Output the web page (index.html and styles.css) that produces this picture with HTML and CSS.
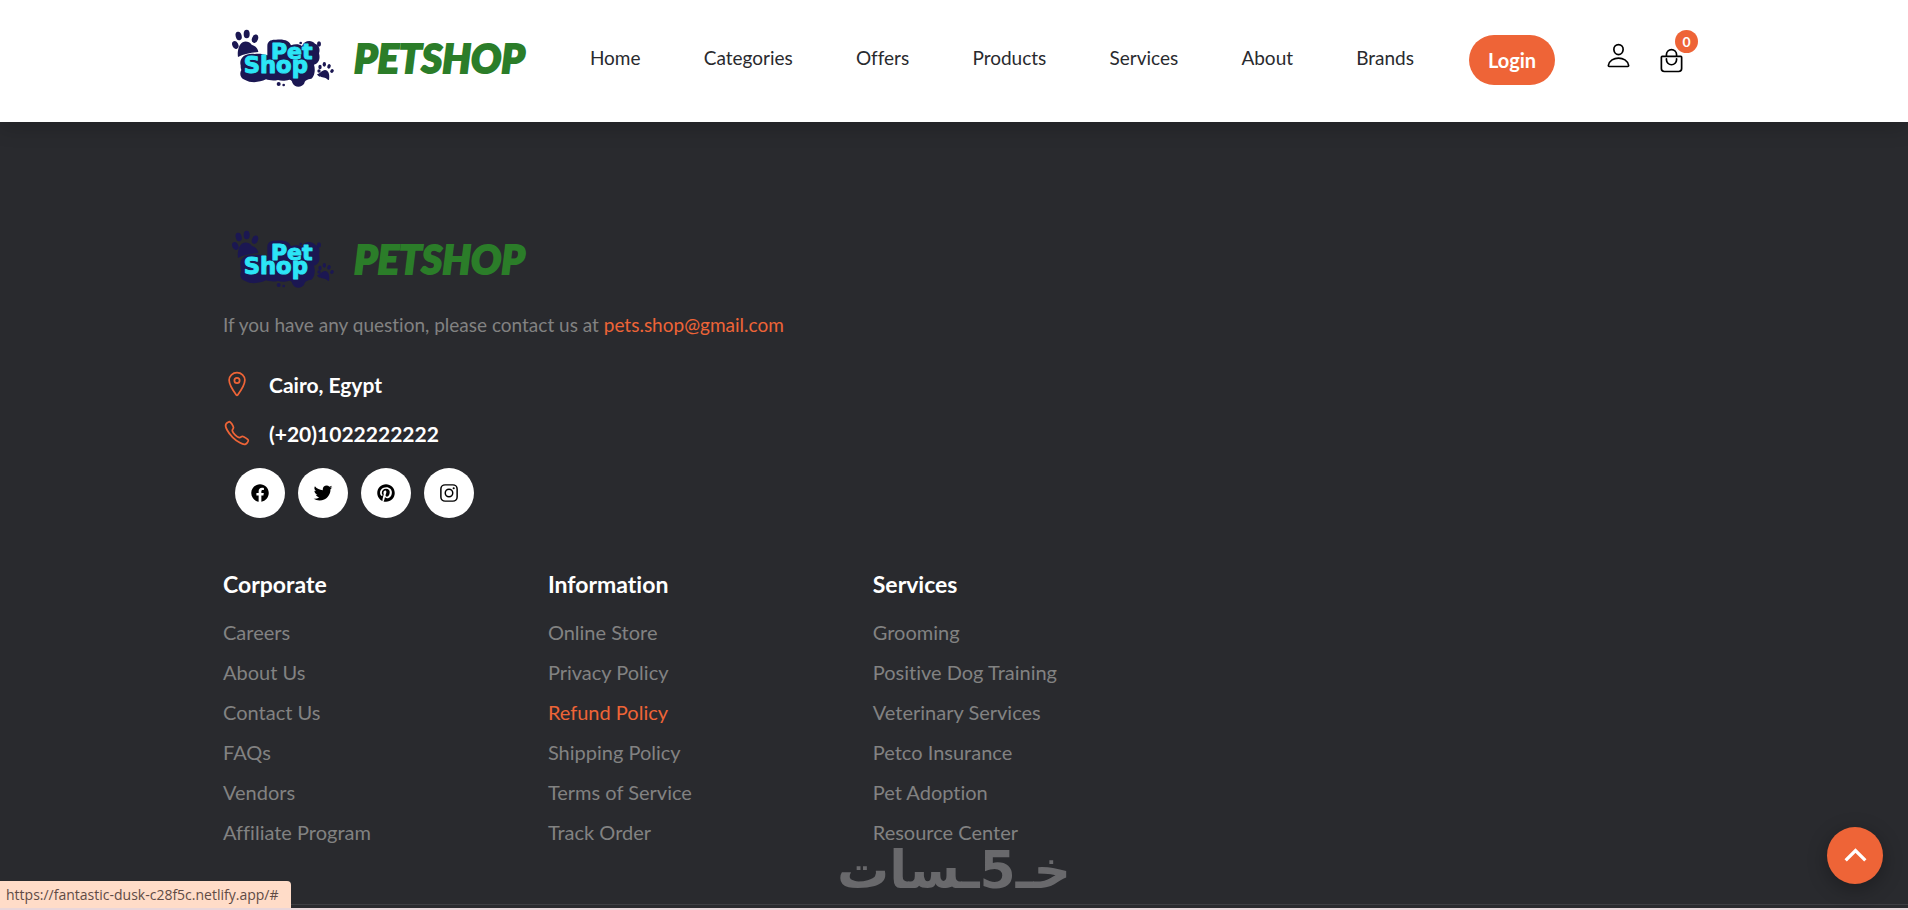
FILE: index.html
```html
<!DOCTYPE html>
<html lang="en">
<head>
  <meta charset="UTF-8">
  <meta name="viewport" content="width=device-width, initial-scale=1.0">
  <title>PetShop</title>
  <link rel="stylesheet" href="styles.css">
</head>
<body>

  <!-- Shared logo artwork -->
  <svg class="sprite" aria-hidden="true">
    <symbol id="logo-art" viewBox="54 48 324 192">
      <g fill="#1b1752">
        <ellipse cx="76" cy="105" rx="9" ry="12" transform="rotate(-25 76 105)"/>
        <ellipse cx="86" cy="78" rx="9" ry="13" transform="rotate(-15 86 78)"/>
        <ellipse cx="110" cy="72" rx="9" ry="13"/>
        <ellipse cx="135" cy="86" rx="9" ry="13" transform="rotate(20 135 86)"/>
        <path d="M84 141c-3-16 3-39 14-44 9-5 21-1 27 7 9 3 19 9 20 22-16 2-42 4-61 15z"/>
        <path d="M92 166C86 145 105 128 134 132C147 130 160 132 172 136L172 108C172 94 182 88 198 89C222 86 238 92 243 106C256 101 268 102 276 108C282 92 304 88 315 101C328 104 331 118 327 130C332 148 325 161 312 164C318 184 311 202 304 206C292 208 284 211 283 220C276 233 254 235 247 218C246 212 244 210 238 209C222 214 212 212 204 210C188 214 176 210 168 208C148 218 122 220 104 209C90 205 88 190 94 180C92 175 92 170 92 166z"/>
        <circle cx="272" cy="99" r="4"/>
        <ellipse cx="327" cy="102" rx="6" ry="8"/>
        <ellipse cx="206" cy="222" rx="6" ry="6"/>
        <circle cx="221" cy="225" r="4"/>
        <ellipse cx="327" cy="183" rx="5" ry="5"/>
        <ellipse cx="330" cy="171" rx="5" ry="7"/>
        <ellipse cx="343" cy="163" rx="5" ry="7"/>
        <ellipse cx="357" cy="169" rx="5" ry="7" transform="rotate(20 357 169)"/>
        <ellipse cx="366" cy="183" rx="5" ry="6" transform="rotate(40 366 183)"/>
        <path d="M321 193c8-1 15-13 24-13 10 1 15 11 12 30-5 0-7-6-13-7-9-2-18 0-23-10z"/>
      </g>
    </symbol>
  </svg>

  <header class="header">
    <div class="container header-row">
      <a href="#" class="logo">
        <svg class="logo-mark" viewBox="54 48 324 192">
          <use href="#logo-art" x="54" y="48" width="324" height="192"/>
          <text x="183" y="148" class="logo-word logo-pet">Pet</text>
          <text x="101" y="190" class="logo-word logo-shop">Shop</text>
        </svg>
        <span class="logo-name">PETSHOP</span>
      </a>

      <nav class="navbar">
        <a href="#">Home</a>
        <a href="#">Categories</a>
        <a href="#">Offers</a>
        <a href="#">Products</a>
        <a href="#">Services</a>
        <a href="#">About</a>
        <a href="#">Brands</a>
      </nav>

      <button type="button" class="btn-login">Login</button>

      <div class="header-actions">
        <a href="#" class="action" aria-label="Account">
          <svg class="icon-line" viewBox="0 0 512 512">
            <path d="M344 144c-3.92 52.87-44 96-88 96s-84.15-43.12-88-96c-4-55 35-96 88-96s92 42 88 96z"/>
            <path d="M256 304c-87 0-175.3 48-191.64 138.6C62.39 453.52 68.57 464 80 464h352c11.44 0 17.62-10.48 15.65-21.4C431.3 352 343 304 256 304z"/>
          </svg>
        </a>
        <a href="#" class="action cart" aria-label="Cart">
          <svg class="icon-line" viewBox="0 0 512 512">
            <path d="M80 176a16 16 0 00-16 16v216c0 30.24 25.76 56 56 56h272c30.24 0 56-24.51 56-54.75V192a16 16 0 00-16-16zM160 176v-32a96 96 0 0196-96h0a96 96 0 0196 96v32"/>
            <path d="M160 224v16a96 96 0 0096 96h0a96 96 0 0096-96v-16"/>
          </svg>
          <span class="badge">0</span>
        </a>
      </div>
    </div>
  </header>

  <footer class="footer">
    <div class="container">
      <!-- Contact -->
      <div class="footer-top">
        <a href="#" class="logo">
          <svg class="logo-mark" viewBox="54 48 324 192">
            <use href="#logo-art" x="54" y="48" width="324" height="192"/>
            <text x="183" y="148" class="logo-word logo-pet">Pet</text>
            <text x="101" y="190" class="logo-word logo-shop">Shop</text>
          </svg>
          <span class="logo-name">PETSHOP</span>
        </a>
        <p class="footer-text">If you have any question, please contact us at <a href="mailto:pets.shop@gmail.com">pets.shop@gmail.com</a></p>

        <ul class="contact-list">
          <li>
            <svg class="icon-line" viewBox="0 0 512 512">
              <path d="M256 48c-79.5 0-144 61.39-144 137 0 87 96 224.87 131.25 272.49a15.77 15.77 0 0025.5 0C304 409.89 400 272.07 400 185c0-75.61-64.5-137-144-137z"/>
              <circle cx="256" cy="192" r="48"/>
            </svg>
            <address>Cairo, Egypt</address>
          </li>
          <li>
            <svg class="icon-line" viewBox="0 0 512 512">
              <path d="M451 374c-15.88-16-54.34-39.35-73-48.76-24.3-12.24-26.3-13.24-45.4.95-12.74 9.47-21.21 17.93-36.12 14.75s-47.31-21.11-75.68-49.39-47.34-61.62-50.53-76.48 5.41-23.23 14.79-36c13.22-18 12.22-21 .92-45.3-8.81-18.9-32.84-57-48.9-72.8C119.9 44 119.9 47 108.83 51.6A160.15 160.15 0 0083 65.37C67 76 58.12 84.83 51.91 98.1s-9 44.38 23.07 102.64 54.57 88.05 101.14 134.49S258.5 406.64 310.85 436c64.76 36.27 89.6 29.2 102.91 23s22.18-15 32.83-31a159.09 159.09 0 0013.8-25.8C465 391.17 468 391.17 451 374z"/>
            </svg>
            <a href="tel:+201022222222">(+20)1022222222</a>
          </li>
        </ul>

        <div class="social">
          <a href="#" aria-label="Facebook">
            <svg viewBox="0 0 512 512"><path d="M480 257.35c0-123.7-100.3-224-224-224s-224 100.3-224 224c0 111.8 81.9 204.47 189 221.29V322.12h-56.89v-64.77H221V208c0-56.13 33.45-87.16 84.61-87.16 24.51 0 50.15 4.38 50.15 4.38v55.13H327.5c-27.81 0-36.51 17.26-36.51 35v42h62.12l-9.92 64.77H291v156.54c107.1-16.81 189-109.48 189-221.31z"/></svg>
          </a>
          <a href="#" aria-label="Twitter">
            <svg viewBox="0 0 512 512"><path d="M496 109.5a201.8 201.8 0 01-56.55 15.3 97.51 97.51 0 0043.33-53.6 197.74 197.74 0 01-62.56 23.5A99.14 99.14 0 00348.31 64c-54.42 0-98.46 43.4-98.46 96.9a93.21 93.21 0 002.54 22.1 280.7 280.7 0 01-203-101.3A95.69 95.69 0 0036 130.4c0 33.6 17.53 63.3 44 80.7A97.5 97.5 0 0135.22 199v1.2c0 47 34 86.1 79 95a100.76 100.76 0 01-25.94 3.4 94.38 94.38 0 01-18.51-1.8c12.51 38.5 48.92 66.5 92.05 67.3A199.59 199.59 0 0139.5 405.6a203 203 0 01-23.5-1.4A278.68 278.68 0 00166.74 448c181.36 0 280.44-147.7 280.44-275.8 0-4.2-.11-8.4-.31-12.5A198.48 198.48 0 00496 109.5z"/></svg>
          </a>
          <a href="#" aria-label="Pinterest">
            <svg viewBox="0 0 512 512"><path d="M256.05 32c-123.7 0-224 100.3-224 224 0 91.7 55.2 170.5 134.1 205.2-.6-15.6-.1-34.4 3.9-51.4 4.3-18.2 28.8-122.1 28.8-122.1s-7.2-14.3-7.2-35.4c0-33.2 19.2-58 43.2-58 20.4 0 30.2 15.3 30.2 33.6 0 20.5-13.1 51.1-19.8 79.5-5.6 23.8 11.9 43.1 35.4 43.1 42.4 0 71-54.5 71-119.1 0-49.1-33.1-85.8-93.2-85.8-67.9 0-110.3 50.7-110.3 107.3 0 19.5 5.8 33.3 14.8 43.9 4.1 4.9 4.7 6.9 3.2 12.5-1.1 4.1-3.5 14-4.6 18-1.5 5.7-6.1 7.7-11.2 5.6-31.3-12.8-45.9-47-45.9-85.6 0-63.6 53.7-139.9 160.1-139.9 85.5 0 141.8 61.9 141.8 128.3 0 87.9-48.9 153.5-120.9 153.5-24.2 0-46.9-13.1-54.7-27.9 0 0-13 51.6-15.8 61.6-4.7 17.3-14 34.5-22.5 48a225.13 225.13 0 0063.5 9.2c123.7 0 224-100.3 224-224S379.75 32 256.05 32z"/></svg>
          </a>
          <a href="#" aria-label="Instagram">
            <svg viewBox="0 0 512 512">
              <rect x="48" y="48" width="416" height="416" rx="108" fill="none" stroke="currentColor" stroke-width="38"/>
              <circle cx="256" cy="256" r="96" fill="none" stroke="currentColor" stroke-width="38"/>
              <circle cx="376" cy="136" r="27"/>
            </svg>
          </a>
        </div>
      </div>

      <!-- Links -->
      <div class="footer-links">
        <div>
          <h2>Corporate</h2>
          <ul>
            <li><a href="#">Careers</a></li>
            <li><a href="#">About Us</a></li>
            <li><a href="#">Contact Us</a></li>
            <li><a href="#">FAQs</a></li>
            <li><a href="#">Vendors</a></li>
            <li><a href="#">Affiliate Program</a></li>
          </ul>
        </div>
        <div>
          <h2>Information</h2>
          <ul>
            <li><a href="#">Online Store</a></li>
            <li><a href="#">Privacy Policy</a></li>
            <li><a href="#" class="active">Refund Policy</a></li>
            <li><a href="#">Shipping Policy</a></li>
            <li><a href="#">Terms of Service</a></li>
            <li><a href="#">Track Order</a></li>
          </ul>
        </div>
        <div>
          <h2>Services</h2>
          <ul>
            <li><a href="#">Grooming</a></li>
            <li><a href="#">Positive Dog Training</a></li>
            <li><a href="#">Veterinary Services</a></li>
            <li><a href="#">Petco Insurance</a></li>
            <li><a href="#">Pet Adoption</a></li>
            <li><a href="#">Resource Center</a></li>
          </ul>
        </div>
      </div>
    </div>
    <div class="footer-bottom"></div>
  </footer>

  <div class="watermark" lang="ar" dir="rtl">خـ5ـسات</div>
  <div class="status">https://fantastic-dusk-c28f5c.netlify.app/#</div>
  <a href="#" class="back-top" aria-label="Back to top">
    <svg viewBox="0 0 512 512"><path d="M112 328l144-144 144 144"/></svg>
  </a>
</body>
</html>
```
FILE: styles.css
```css
* { box-sizing: border-box; margin: 0; padding: 0; }
html, body { height: 100%; }
body { font-family: Lato, sans-serif; font-size: 20px; font-variant-ligatures: none; background: #292a2e; display: flex; flex-direction: column; overflow: hidden; }
a { color: inherit; text-decoration: none; }
ul { list-style: none; }
svg { display: block; }
.sprite { position: absolute; width: 0; height: 0; }
.container { width: 78%; max-width: 1486px; margin: 0 auto; padding: 0 12px; }

/* Header */
.header { position: relative; z-index: 2; flex: none; background: #fff; padding: 26px 0 32px; box-shadow: 0 5px 20px rgba(0,0,0,0.2); }
.header-row { display: flex; align-items: center; }
.logo { display: flex; align-items: center; gap: 18px; padding-left: 5px; width: fit-content; }
.logo-mark { width: 108px; height: 64px; }
.logo-word { font-family: "DejaVu Sans", sans-serif; font-weight: bold; fill: #2ce5f6; stroke: #2ce5f6; stroke-width: 3; stroke-linejoin: round; }
.logo-pet { font-size: 66px; }
.logo-shop { font-size: 68px; }
.logo-name { font-size: 40px; line-height: 64px; font-weight: 900; font-style: italic; color: #2b7d29; -webkit-text-stroke: 2px #2b7d29; }
.navbar { display: flex; flex: 1; justify-content: space-between; font-size: 19px; line-height: 24px; color: #292a2e; padding: 0 55px 0 65px; }
.btn-login { width: 86px; height: 50px; margin-top: 4px; border: none; border-radius: 25px; background: #ee6437; color: #fff; font: bold 20px Lato, sans-serif; cursor: pointer; }
.header-actions { display: flex; align-items: flex-start; gap: 26px; padding-left: 50px; }
.icon-line { width: 27px; height: 27px; fill: none; stroke: currentColor; stroke-width: 32; stroke-linecap: round; stroke-linejoin: round; }
.action { position: relative; color: #000; }
.cart { padding-top: 5px; }
.badge { position: absolute; top: -12px; right: -13px; width: 23px; height: 23px; border-radius: 50%; background: #ee6437; color: #fff; font-size: 14px; line-height: 23px; font-weight: bold; text-align: center; }

/* Footer */
.footer { flex: 1; display: flex; flex-direction: column; justify-content: space-between; padding-top: 105px; color: #828282; }
.footer-text { font-size: 19px; line-height: 32px; margin-top: 18px; }
.footer-text a { color: #ee6437; }
.contact-list { margin-top: 29px; color: #fff; font-size: 21px; font-weight: bold; }
.contact-list li { display: flex; align-items: center; gap: 18px; height: 28px; margin-bottom: 21px; }
.contact-list address { font-style: normal; }
.contact-list .icon-line { width: 28px; height: 28px; color: #ee6437; }
.social { display: flex; gap: 13px; padding-left: 12px; }
.social a { display: flex; align-items: center; justify-content: center; width: 50px; height: 50px; border-radius: 50%; background: #fff; color: #000; }
.social svg { width: 20px; height: 20px; fill: currentColor; }
.footer-links { display: grid; grid-template-columns: 2fr 2fr 2fr 3fr; margin-top: 50px; }
.footer-links h2 { font-size: 23px; line-height: 32px; color: #fff; margin-bottom: 12px; }
.footer-links li { line-height: 40px; }
.footer-links .active { color: #ee6437; }
.footer-bottom { height: 6px; border-top: 1px solid #3d3e42; border-bottom: 2px solid #ead6da; }

/* Overlays */
.watermark { position: fixed; bottom: 16px; left: 50%; transform: translateX(-50%); font: bold 52px/48px "DejaVu Sans", sans-serif; color: #69696c; }
.status { position: fixed; left: 0; bottom: 2px; padding: 0 12px 0 6px; border-top-right-radius: 4px; background: #ffdcc8; color: #5f4b45; font: 14px/27px "Open Sans", sans-serif; }
.back-top { position: fixed; right: 25px; bottom: 26px; display: flex; align-items: center; justify-content: center; width: 56px; height: 57px; border-radius: 50%; background: #ee6437; box-shadow: 0 5px 20px rgba(0,0,0,0.3); }
.back-top svg { width: 35px; height: 35px; fill: none; stroke: #fff; stroke-width: 48; }
```
